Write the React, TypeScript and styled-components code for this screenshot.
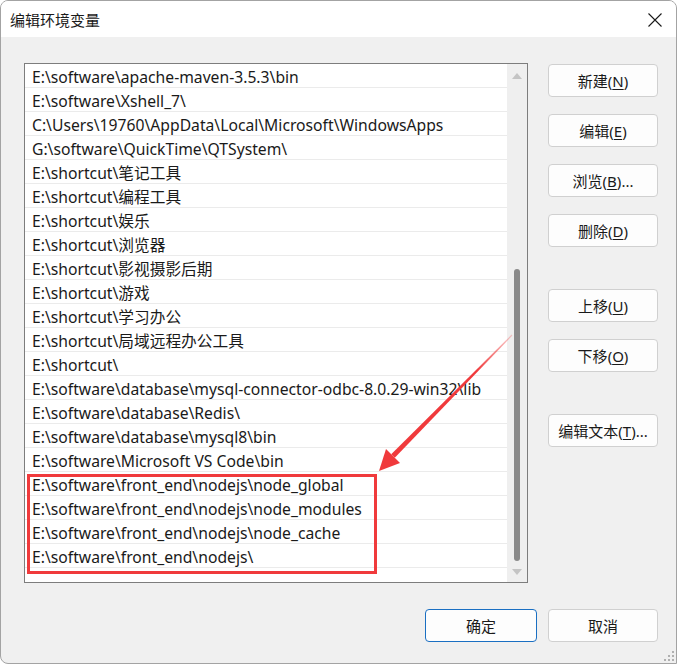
import React from 'react'
import styled, { createGlobalStyle, css } from 'styled-components'

const GlobalStyle = createGlobalStyle`
    html, body {
        margin: 0;
        padding: 0;
        background: #ffffff;
    }
    body {
        font-family: "Noto Sans", "Noto Sans CJK SC", sans-serif;
    }
`

const paths = [
    'E:\\software\\apache-maven-3.5.3\\bin',
    'E:\\software\\Xshell_7\\',
    'C:\\Users\\19760\\AppData\\Local\\Microsoft\\WindowsApps',
    'G:\\software\\QuickTime\\QTSystem\\',
    'E:\\shortcut\\笔记工具',
    'E:\\shortcut\\编程工具',
    'E:\\shortcut\\娱乐',
    'E:\\shortcut\\浏览器',
    'E:\\shortcut\\影视摄影后期',
    'E:\\shortcut\\游戏',
    'E:\\shortcut\\学习办公',
    'E:\\shortcut\\局域远程办公工具',
    'E:\\shortcut\\',
    'E:\\software\\database\\mysql-connector-odbc-8.0.29-win32\\lib',
    'E:\\software\\database\\Redis\\',
    'E:\\software\\database\\mysql8\\bin',
    'E:\\software\\Microsoft VS Code\\bin',
    'E:\\software\\front_end\\nodejs\\node_global',
    'E:\\software\\front_end\\nodejs\\node_modules',
    'E:\\software\\front_end\\nodejs\\node_cache',
    'E:\\software\\front_end\\nodejs\\',
]

const Window = styled.div`
    position: relative;
    width: 677px;
    height: 664px;
    box-sizing: border-box;
    border: 1px solid #a3a3a3;
    border-radius: 8px 8px 0 8px;
    background: #f0f0f0;
    display: flex;
    flex-direction: column;
    overflow: hidden;
    font-family: "Noto Sans", "Noto Sans CJK SC", sans-serif;
    color: #1a1a1a;
`

const TitleBar = styled.div`
    height: 36px;
    background: #ffffff;
    display: flex;
    align-items: center;
    justify-content: space-between;
    padding: 0 13px 0 9px;
    font-size: 15px;
    font-family: "Noto Sans CJK SC", sans-serif;
`

const CloseIcon = styled.svg`
    width: 16px;
    height: 16px;
    margin-top: 2px;
`

const Body = styled.div`
    flex: 1;
    display: flex;
    flex-direction: column;
    padding: 26px 18px 0 23px;
`

const MainRow = styled.div`
    display: flex;
    gap: 20px;
`

const ListBox = styled.div`
    position: relative;
    width: 504px;
    height: 520px;
    box-sizing: border-box;
    border: 1px solid #7d7d7d;
    background: #ffffff;
    display: flex;
`

const Rows = styled.div`
    flex: 1;
    display: flex;
    flex-direction: column;
`

const Row = styled.div`
    height: 19px;
    padding-top: 4px;
    line-height: 19px;
    border-bottom: 1px solid #ebebeb;
    padding-left: 7px;
    font-size: 15.7px;
    white-space: nowrap;
    overflow: hidden;
`

const Scrollbar = styled.div`
    width: 20px;
    background: #efefef;
    display: flex;
    flex-direction: column;
    align-items: center;
    padding: 9px 0 7px;
    box-sizing: border-box;
`

const Arrow = styled.div<{ $down?: boolean }>`
    width: 0;
    height: 0;
    border-left: 5px solid transparent;
    border-right: 5px solid transparent;
    ${p =>
        p.$down
            ? css`border-top: 6px solid #c4c4c4;`
            : css`border-bottom: 6px solid #c4c4c4;`}
`

const Track = styled.div`
    flex: 1;
    display: flex;
    flex-direction: column;
    justify-content: flex-end;
    padding-bottom: 8px;
`

const Thumb = styled.div`
    width: 6px;
    height: 292px;
    border-radius: 3px;
    background: #8a8a8a;
`

const Highlight = styled.div`
    position: absolute;
    left: 2px;
    top: 410px;
    width: 344px;
    height: 94px;
    border: 3px solid #f03a3c;
`

const ButtonColumn = styled.div`
    display: flex;
    flex-direction: column;
`

const Button = styled.button<{ $gap?: number; $primary?: boolean; $width?: number }>`
    width: ${p => p.$width ?? 110}px;
    height: 33px;
    margin-top: ${p => p.$gap ?? 0}px;
    box-sizing: border-box;
    border: 1px solid ${p => (p.$primary ? '#1a6fc2' : '#d0d0d0')};
    border-radius: 4px;
    background: #fdfdfd;
    font-family: "Noto Sans", "Noto Sans CJK SC", sans-serif;
    font-size: 15px;
    color: #1a1a1a;
    padding: 0;
    cursor: default;
    u {
        text-underline-offset: 2px;
    }
`

const Footer = styled.div`
    display: flex;
    justify-content: flex-end;
    gap: 11px;
    margin-top: 26px;
`

const Grip = styled.svg`
    position: absolute;
    right: 1px;
    bottom: 1px;
    width: 12px;
    height: 12px;
`

const Annotation = styled.svg`
    position: absolute;
    left: 0;
    top: 0;
    width: 677px;
    height: 664px;
    pointer-events: none;
`

const sideButtons: { label: string; key: string; tail?: string; gap: number }[] = [
    { label: '新建', key: 'N', gap: 1 },
    { label: '编辑', key: 'E', gap: 17 },
    { label: '浏览', key: 'B', tail: '...', gap: 17 },
    { label: '删除', key: 'D', gap: 17 },
    { label: '上移', key: 'U', gap: 42 },
    { label: '下移', key: 'O', gap: 17 },
    { label: '编辑文本', key: 'T', tail: '...', gap: 42 },
]

const App: React.FC = () => {
    return (
        <>
            <GlobalStyle />
            <Window>
                <TitleBar>
                    <span>编辑环境变量</span>
                    <CloseIcon viewBox="0 0 16 16">
                        <path d="M1.5 1.5 L14.5 14.5 M14.5 1.5 L1.5 14.5" stroke="#1a1a1a" strokeWidth="1.1" />
                    </CloseIcon>
                </TitleBar>
                <Body>
                    <MainRow>
                        <ListBox>
                            <Rows>
                                {paths.map(p => (
                                    <Row key={p}>{p}</Row>
                                ))}
                            </Rows>
                            <Scrollbar>
                                <Arrow />
                                <Track>
                                    <Thumb />
                                </Track>
                                <Arrow $down />
                            </Scrollbar>
                            <Highlight />
                        </ListBox>
                        <ButtonColumn>
                            {sideButtons.map(b => (
                                <Button key={b.key} $gap={b.gap}>
                                    {b.label}(<u>{b.key}</u>){b.tail}
                                </Button>
                            ))}
                        </ButtonColumn>
                    </MainRow>
                    <Footer>
                        <Button $primary $width={112}>确定</Button>
                        <Button>取消</Button>
                    </Footer>
                </Body>
                <Grip viewBox="0 0 12 12">
                    {[
                        [9, 1], [9, 5], [5, 5], [9, 9], [5, 9], [1, 9],
                    ].map(([x, y]) => (
                        <rect key={`${x}-${y}`} x={x} y={y} width="2" height="2" fill="#b0b0b0" />
                    ))}
                </Grip>
                <Annotation viewBox="0 0 677 664">
                    <defs>
                        <linearGradient id="shaft" x1="511" y1="334" x2="392" y2="455" gradientUnits="userSpaceOnUse">
                            <stop offset="0" stopColor="#f03a3c" stopOpacity="0.25" />
                            <stop offset="0.3" stopColor="#f03a3c" stopOpacity="1" />
                            <stop offset="1" stopColor="#f03a3c" stopOpacity="1" />
                        </linearGradient>
                    </defs>
                    <polygon points="511.4,334.4 510.6,333.6 390.2,453.3 393.8,456.7" fill="url(#shaft)" />
                    <polygon points="378,470 385,448 399,462" fill="#f03a3c" />
                </Annotation>
            </Window>
        </>
    )
}

export default App
